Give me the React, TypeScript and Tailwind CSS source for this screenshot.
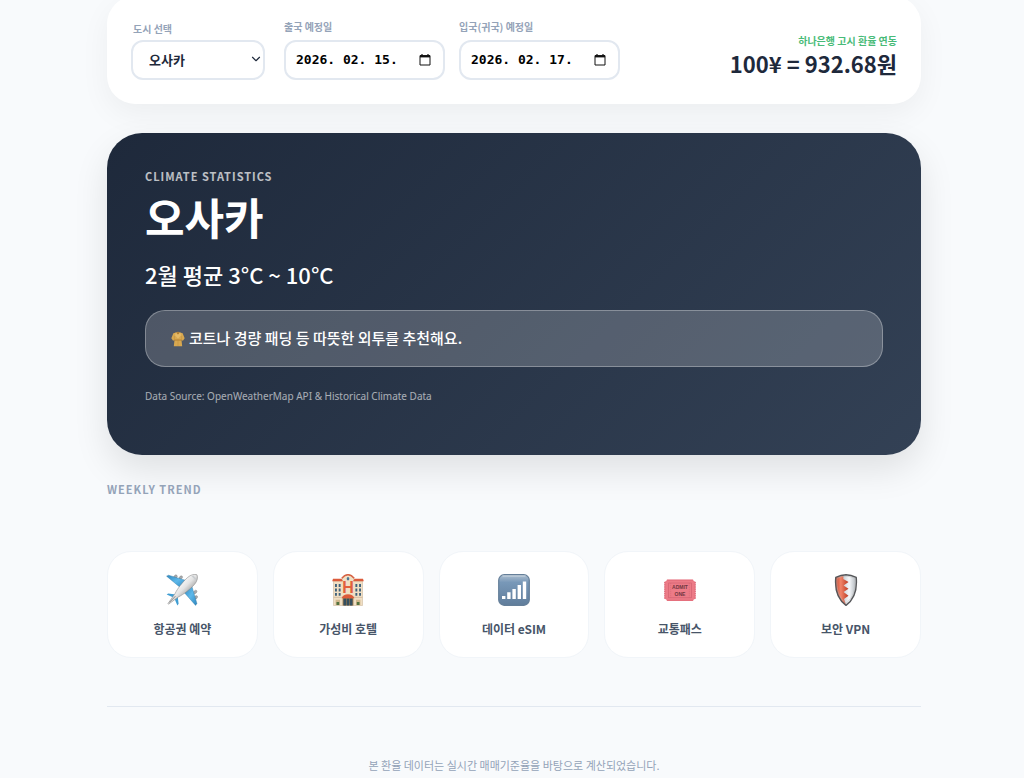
import { useState } from "react";
import type { ReactNode } from "react";
import { ChevronDown } from "lucide-react";

const CITIES = ["오사카", "도쿄", "후쿠오카", "삿포로"];

function PlaneIcon() {
    return (
        <svg viewBox="0 0 32 32" className="w-8 h-8" aria-hidden="true">
            <defs>
                <linearGradient id="plane-wing" x1="0" y1="0" x2="1" y2="1">
                    <stop offset="0" stopColor="#2f87bf" />
                    <stop offset="0.5" stopColor="#5db8ea" />
                    <stop offset="1" stopColor="#2f87bf" />
                </linearGradient>
                <linearGradient id="plane-body" x1="0.3" y1="0.3" x2="0.7" y2="0.7">
                    <stop offset="0" stopColor="#ffffff" />
                    <stop offset="0.5" stopColor="#e3e3e3" />
                    <stop offset="1" stopColor="#9d9d9d" />
                </linearGradient>
            </defs>
            <g fill="#a9abad" stroke="#77797b" strokeWidth="0.4">
                <ellipse cx="9.5" cy="2.7" rx="1.5" ry="2" transform="rotate(45 9.5 2.7)" />
                <ellipse cx="14.8" cy="3.6" rx="1.4" ry="2" transform="rotate(45 14.8 3.6)" />
                <ellipse cx="29.2" cy="18" rx="1.4" ry="2" transform="rotate(45 29.2 18)" />
                <ellipse cx="29.8" cy="23.4" rx="1.4" ry="2" transform="rotate(45 29.8 23.4)" />
            </g>
            <path d="M.6 2.2 2.5 1.2 20 6.4 14 13.3Z" fill="url(#plane-wing)" stroke="#28759f" strokeWidth="0.4" />
            <path d="M25.8 12 30.9 29.4 29.6 31.4 18.5 18.8Z" fill="url(#plane-wing)" stroke="#28759f" strokeWidth="0.4" />
            <path d="M.7 20.6 2.2 19.6 9.8 20.4 8 23.8Z" fill="#3f9dd2" />
            <path d="M11.7 22.4 12.6 29.8 11.4 31.4 8.2 24Z" fill="#3f9dd2" />
            <path
                d="M31 .8C28.6-.2 24.8.6 21.7 3.4 16.8 7.8 11 15.2 9.3 19.2L2 29.6 2.5 30.2 12.8 22.7C17 20.8 24.3 15.2 28.6 10.3 31.4 7.1 32 3.2 31 .8Z"
                fill="url(#plane-body)"
                stroke="#8b8b8b"
                strokeWidth="0.6"
            />
            <path d="M25.4 2.1 27.4 1.6 30 4.4 29.5 6.2Z" fill="#c9cdd0" />
            <path d="M3.4 28.4 9.4 22.2" stroke="#7c7c7c" strokeWidth="0.9" />
        </svg>
    );
}

function HotelIcon() {
    return (
        <svg viewBox="0 0 32 32" className="w-8 h-8" aria-hidden="true">
            <path d="M1.5 7H10V4Q16-3.5 22 4V7H30.5V31.5H1.5Z" fill="#f0dfc4" stroke="#c7ae91" strokeWidth="0.5" />
            <path d="M1 4.7H9.5L11 7.3H.2ZM22.5 4.7H31L31.8 7.3H21Z" fill="#dc5b3b" />
            <path d="M9.8 4.2Q16-2.8 22.2 4.2" fill="none" stroke="#d76345" strokeWidth="1.5" />
            <ellipse cx="16" cy="4.8" rx="1.3" ry="1.8" fill="#4b7895" />
            <g fill="#40627c">
                <path d="M3 10H4.9V13H3ZM6.7 10H8.6V13H6.7ZM23.4 10H25.3V13H23.4ZM27.1 10H29V13H27.1Z" />
                <path d="M3 14.6H4.9V17.4H3ZM6.7 14.6H8.6V17.4H6.7ZM23.4 14.6H25.3V17.4H23.4ZM27.1 14.6H29V17.4H27.1Z" />
                <path d="M3 19H4.9V21.8H3ZM6.7 19H8.6V21.8H6.7ZM23.4 19H25.3V21.8H23.4ZM27.1 19H29V21.8H27.1Z" />
            </g>
            <text x="16" y="19.4" textAnchor="middle" fontFamily="Liberation Sans" fontSize="16" fontWeight="700" fill="#e2603c">H</text>
            <path d="M1.5 23.4H30.5" stroke="#cbb398" strokeWidth="0.7" />
            <path d="M3.6 25.8H8V31H3.6ZM24 25.8H28.4V31H24Z" fill="#d1b88e" />
            <path d="M4.5 28H7.2V31H4.5ZM24.8 28H27.5V31H24.8Z" fill="#53733f" />
            <path d="M10.6 24H21.4V31.5H10.6Z" fill="#9e7a4e" />
            <path d="M11.5 24.5H14.3V31.5H11.5ZM14.9 24.5H17.1V31.5H14.9ZM17.7 24.5H20.5V31.5H17.7Z" fill="#344f60" />
            <path d="M9.6 24.2Q11 20.2 16 20.2T22.4 24.2Z" fill="#dc5b3b" />
        </svg>
    );
}

function SignalIcon() {
    return (
        <svg viewBox="0 0 32 32" className="w-8 h-8" aria-hidden="true">
            <defs>
                <linearGradient id="signal-bg" x1="0" y1="0" x2="0" y2="1">
                    <stop offset="0" stopColor="#aebfd0" />
                    <stop offset="0.25" stopColor="#7898b8" />
                    <stop offset="1" stopColor="#607d9b" />
                </linearGradient>
            </defs>
            <rect x="0.7" y="0.7" width="30.6" height="30.6" rx="5.5" fill="url(#signal-bg)" stroke="#657f99" strokeWidth="1.2" />
            <path d="M5 2H27" stroke="#c9d5df" strokeWidth="1" strokeLinecap="round" />
            <path d="M4 22H7.4V25H4ZM9.2 18.2H12.6V25H9.2ZM14.4 15H17.8V25H14.4ZM19.6 11H23V25H19.6ZM24.8 7.4H28.2V25H24.8Z" fill="#fff" />
        </svg>
    );
}

function TicketIcon() {
    return (
        <svg viewBox="0 0 32 32" className="w-8 h-8" aria-hidden="true">
            <path d="M3 5.5H29Q29.3 7.5 31.5 7.8V24.8Q29.3 25.1 29 27H3Q2.7 25.1.5 24.8V7.8Q2.7 7.5 3 5.5Z" fill="#ec7b87" />
            <path d="M.8 8V25M31.2 8V25" stroke="#d75f70" strokeWidth="1" strokeDasharray="1.2 1" />
            <path d="M3.2 6.3H28.8M3.2 26.3H28.8" stroke="#df6875" strokeWidth="0.7" />
            <rect x="4.7" y="9" width="22.6" height="14.8" fill="none" stroke="#cf5e6e" strokeWidth="0.6" />
            <path d="M6.7 9.2V23.6M25.3 9.2V23.6" stroke="#cf5e6e" strokeWidth="0.5" strokeDasharray="1 1" />
            <g fontFamily="Liberation Sans" fontSize="5" fontWeight="700" fill="#713641" textAnchor="middle">
                <text x="16" y="15">ADMIT</text>
                <text x="16" y="22">ONE</text>
            </g>
        </svg>
    );
}

function ShieldIcon() {
    return (
        <svg viewBox="0 0 32 32" className="w-8 h-8" aria-hidden="true">
            <defs>
                <linearGradient id="shield-red" x1="0" y1="0" x2="1" y2="0">
                    <stop offset="0" stopColor="#c94830" />
                    <stop offset="0.4" stopColor="#f18469" />
                    <stop offset="1" stopColor="#bd3b22" />
                </linearGradient>
                <linearGradient id="shield-silver" x1="0" y1="0" x2="1" y2="0">
                    <stop offset="0.4" stopColor="#ced3d8" />
                    <stop offset="0.65" stopColor="#f6f8fa" />
                    <stop offset="1" stopColor="#aeb4ba" />
                </linearGradient>
            </defs>
            <path d="M16 .8Q21 .9 26.2 3.4C27.3 15 24.8 25 16 31.4 7.2 25 4.7 15 5.8 3.4Q11 .9 16 .8Z" fill="url(#shield-silver)" />
            <path d="M13.5 1.6 13.3 5 18.5 8 13.6 11.5 18.5 14.8 13.6 18 18.5 21.8 14 25 16 31C7.2 25 4.7 15 5.8 3.4Z" fill="url(#shield-red)" />
            <path d="M16 .8Q21 .9 26.2 3.4C27.3 15 24.8 25 16 31.4 7.2 25 4.7 15 5.8 3.4Q11 .9 16 .8Z" fill="none" stroke="#56575a" strokeWidth="1.4" />
            <path d="M16 2.2Q20.6 2.2 24.9 4.3C25.8 14.4 23.5 23.5 16 29.4 8.5 23.5 6.2 14.4 7.1 4.3Q11.4 2.2 16 2.2Z" fill="none" stroke="#b5b5b5" strokeWidth="0.5" />
        </svg>
    );
}

function CoatIcon() {
    return (
        <svg viewBox="0 0 16 18" className="w-3.5 h-4 shrink-0" aria-hidden="true">
            <path d="M5.6 1.5 8 .8l2.4.7 2.9 1L15.6 8l-2 3-1.6-.8.8 7.2H3.2L4 10.2l-1.6.8-2-3 2.3-5.5Z" fill="#d8a850" />
            <path d="m6.4 1.4 1.6 2.4 1.6-2.4L8 1.6Z" fill="#9c6825" />
            <path d="m5.4 1.6-.8 3L8 9l3.4-4.4-.8-3L8 4.4Z" fill="#e5ba68" />
            <path d="M4 10.2h8" stroke="#a9782e" strokeWidth="0.9" />
            <path d="M8 8.5V17M3.9 5.5v5M12.1 5.5v5" stroke="#b98a3c" strokeWidth="0.5" />
        </svg>
    );
}

function CalendarIcon() {
    return (
        <svg viewBox="0 0 12 12" className="w-3 h-3" aria-hidden="true">
            <path d="M3 0V2M9 0V2" stroke="#111" strokeWidth="1.2" />
            <path d="M1 1.6H11V11H1Z" fill="none" stroke="#111" strokeWidth="1" strokeLinejoin="round" />
            <path d="M1 1.4H11V3.4H1Z" fill="#111" />
        </svg>
    );
}

interface DateFieldProps {
    id: string;
    label: string;
    value: string;
    onChange: (value: string) => void;
}

function DateField({ id, label, value, onChange }: DateFieldProps) {
    return (
        <div className="flex flex-col gap-[5px]">
            <label htmlFor={id} className="text-[10px] leading-4 font-bold text-[#94a3b8]">{label}</label>
            <div className="flex items-center w-[161px] h-10 px-2.5 rounded-xl border-2 border-[#e2e8f0] bg-white">
                <input
                    id={id}
                    type="text"
                    value={value}
                    onChange={(e) => onChange(e.target.value)}
                    className="flex-1 min-w-0 bg-transparent outline-none font-['DejaVu_Sans_Mono',monospace] text-[13px] font-bold text-black"
                />
                <button type="button" aria-label={`${label} 달력`} className="p-0.5">
                    <CalendarIcon />
                </button>
            </div>
        </div>
    );
}

const LINKS: { label: string; icon: ReactNode }[] = [
    { label: "항공권 예약", icon: <PlaneIcon /> },
    { label: "가성비 호텔", icon: <HotelIcon /> },
    { label: "데이터 eSIM", icon: <SignalIcon /> },
    { label: "교통패스", icon: <TicketIcon /> },
    { label: "보안 VPN", icon: <ShieldIcon /> },
];

export default function App() {
    const [city, setCity] = useState("오사카");
    const [departure, setDeparture] = useState("2026. 02. 15.");
    const [arrival, setArrival] = useState("2026. 02. 17.");

    return (
        <div className="min-h-screen bg-[#f8fafc] pl-1 overflow-hidden font-['Noto_Sans_CJK_KR',sans-serif] text-[#1e293b]">
            <div className="max-w-[814px] mx-auto -mt-1 pb-1">
                {/* Search bar */}
                <header className="flex items-end justify-between bg-white rounded-[28px] px-6 pt-[23px] pb-6 shadow-[0_10px_30px_rgba(0,0,0,0.05)]">
                    <div className="flex items-end">
                        <div className="flex flex-col gap-[3px] mr-[19px]">
                            <label htmlFor="city" className="pl-0.5 text-[10px] leading-4 font-bold text-[#94a3b8]">도시 선택</label>
                            <div className="relative">
                                <select
                                    id="city"
                                    value={city}
                                    onChange={(e) => setCity(e.target.value)}
                                    className="appearance-none block w-[134px] h-10 pl-4 rounded-xl border-2 border-[#e2e8f0] bg-white text-[13px] font-bold outline-none"
                                >
                                    {CITIES.map((name) => (
                                        <option key={name}>{name}</option>
                                    ))}
                                </select>
                                <ChevronDown className="absolute right-0.5 top-3 w-3.5 h-3.5 pointer-events-none" />
                            </div>
                        </div>
                        <div className="flex gap-3.5">
                            <DateField id="departure" label="출국 예정일" value={departure} onChange={setDeparture} />
                            <DateField id="arrival" label="입국(귀국) 예정일" value={arrival} onChange={setArrival} />
                        </div>
                    </div>
                    <div className="pb-[3px] text-right">
                        <p className="text-[10px] leading-4 font-bold text-[#48bb78]">하나은행 고시 환율 연동</p>
                        <p className="text-[22px] leading-7 font-bold">100¥ = 932.68원</p>
                    </div>
                </header>

                {/* Climate card */}
                <section className="mt-[29px] px-[38px] pt-[35px] pb-[51px] rounded-[35px] bg-[linear-gradient(135deg,#1e293b,#334155)] text-white shadow-[0_15px_35px_rgba(0,0,0,0.1)]">
                    <p className="text-[11px] leading-4 font-bold tracking-[1px] opacity-70">CLIMATE STATISTICS</p>
                    <h1 className="mt-1 text-[43px] leading-[56px] font-bold">오사카</h1>
                    <p className="mt-3.5 text-[22px] leading-8 font-medium">2월 평균 3°C ~ 10°C</p>
                    <div className="mt-5 flex items-center gap-1 h-[57px] px-[25px] rounded-[20px] border border-white/30 bg-white/20">
                        <CoatIcon />
                        <p className="text-[15px] font-medium">코트나 경량 패딩 등 따뜻한 외투를 추천해요.</p>
                    </div>
                    <p className="mt-[21px] font-['Noto_Sans',sans-serif] text-[10px] leading-4 opacity-60">
                        Data Source: OpenWeatherMap API &amp; Historical Climate Data
                    </p>
                </section>

                <h2 className="mt-[26px] text-[11px] leading-4 font-bold tracking-[1px] text-[#94a3b8]">WEEKLY TREND</h2>

                {/* Travel shortcuts */}
                <nav className="mt-[54px] grid grid-cols-5 gap-[15px]">
                    {LINKS.map(({ label, icon }) => (
                        <a
                            key={label}
                            href="#"
                            className="flex flex-col items-center pt-[22px] pb-5 rounded-3xl border border-[#f1f5f9] bg-white text-[#475569]"
                        >
                            {icon}
                            <span className="mt-[15px] text-[12px] leading-4 font-bold">{label}</span>
                        </a>
                    ))}
                </nav>

                <footer className="mt-12 pt-[50px] border-t border-[#e2e8f0] text-center text-[11px] leading-4 text-[#94a3b8]">
                    본 환율 데이터는 실시간 매매기준율을 바탕으로 계산되었습니다.
                </footer>
            </div>
        </div>
    );
}
